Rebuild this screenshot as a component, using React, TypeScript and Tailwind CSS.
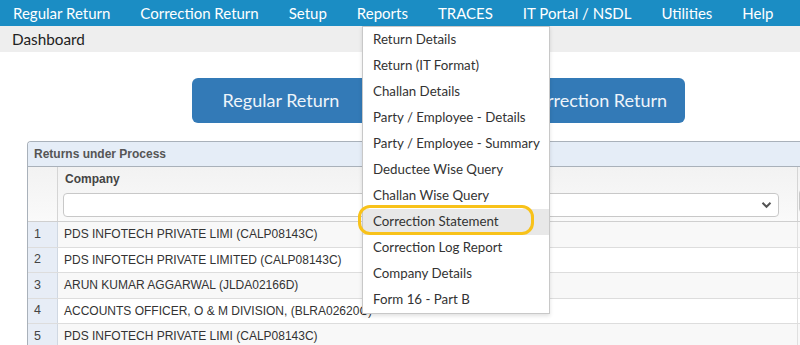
import React from "react";

const navItems = ["Regular Return", "Correction Return", "Setup", "Reports", "TRACES", "IT Portal / NSDL", "Utilities", "Help"];
const menuItems = [
  "Return Details",
  "Return (IT Format)",
  "Challan Details",
  "Party / Employee - Details",
  "Party / Employee - Summary",
  "Deductee Wise Query",
  "Challan Wise Query",
  "Correction Statement",
  "Correction Log Report",
  "Company Details",
  "Form 16 - Part B",
];
const rows = [
  "PDS INFOTECH PRIVATE LIMI (CALP08143C)",
  "PDS INFOTECH PRIVATE LIMITED (CALP08143C)",
  "ARUN KUMAR AGGARWAL (JLDA02166D)",
  "ACCOUNTS OFFICER, O & M DIVISION, (BLRA02620C)",
  "PDS INFOTECH PRIVATE LIMI (CALP08143C)",
];

export default function App() {
  return (
    <div className="relative w-[800px] h-[345px] overflow-hidden bg-white" style={{ fontFamily: "Lato, 'Noto Sans', sans-serif" }}>
      <div className="h-[26px] bg-[#1b8dc4] flex items-center pl-[13px] gap-[30px] text-white text-[15px]">
        {navItems.map((n) => (
          <span key={n} className="whitespace-nowrap">{n}</span>
        ))}
      </div>
      <div className="h-[26px] bg-[#eeeeee] flex items-center pl-3 text-[15.3px] text-[#222]">Dashboard</div>

      <div className="mt-[26px] flex pl-[192px] gap-[137px]">
        <div className="w-[178px] h-[45px] rounded-[6px] bg-[#337ab7] text-[#eef4fa] text-[18px] flex items-center justify-center">Regular Return</div>
        <div className="w-[178px] h-[45px] rounded-[6px] bg-[#337ab7] text-[#eef4fa] text-[18px] flex items-center justify-center">Correction Return</div>
      </div>

      <div className="mt-[18px] ml-[27px] border border-r-0 border-b-0 border-[#a9b1ba] rounded-tl-[4px] overflow-hidden" style={{ fontFamily: "'Liberation Sans', Arial, sans-serif" }}>
        <div className="h-[25px] bg-[#e5edf7] border-b border-[#a9b1ba] flex items-center pl-[6px] text-[12px] font-bold text-[#555]">Returns under Process</div>
        <div className="flex h-[55px] border-b border-[#cfcfcf] bg-gradient-to-b from-[#f2f2f2] to-[#fafafa]">
          <div className="w-[30px] border-r border-[#d5d5d5] shrink-0" />
          <div className="w-[740px] shrink-0 border-r border-[#d5d5d5] pl-[5px] pr-[18px] pt-[3px]">
            <div className="text-[12px] font-bold text-[#444] pl-[2px]">Company</div>
            <div className="mt-[5px] h-[24px] bg-white border border-[#c8c8c8] rounded-[4px] flex items-center justify-end pr-[6px]">
              <svg width="11" height="8" viewBox="0 0 11 8"><path d="M1.5 1.8 L5.5 5.8 L9.5 1.8" fill="none" stroke="#555" strokeWidth="2" /></svg>
            </div>
          </div>
          <div className="pt-[22px] pl-[1px]">
            <div className="h-[24px] w-[20px] bg-white border border-[#c8c8c8] rounded-l-[4px]" />
          </div>
        </div>
        {rows.map((r, i) => (
          <div key={i} className={`flex h-[25.5px] border-b border-[#dddddd] ${i % 2 === 0 ? "bg-[#f8f8f8]" : "bg-white"}`}>
            <div className="w-[30px] shrink-0 bg-[#e7edf6] border-r border-[#d0d8e2] flex items-center pl-[6px] text-[12.5px] text-[#444]">{i + 1}</div>
            <div className="w-[740px] shrink-0 border-r border-[#e0e0e0] flex items-center pl-[6px] text-[12px] text-[#333] whitespace-nowrap">{r}</div>
          </div>
        ))}
      </div>

      <div className="absolute left-[362px] top-[26px] w-[188px] bg-white border border-[#c8c8c8] shadow-[0_2px_4px_rgba(0,0,0,0.12)]">
        {menuItems.map((m) => (
          <div key={m} className={`h-[26px] flex items-center pl-[10px] text-[13.3px] text-[#333] whitespace-nowrap ${m === "Correction Statement" ? "bg-[#e8e8e8]" : ""}`}>{m}</div>
        ))}
      </div>
      <div className="absolute left-[358px] top-[205px] w-[176px] h-[30px] border-[3.5px] border-[#f8c21a] rounded-[12px]" />
    </div>
  );
}
